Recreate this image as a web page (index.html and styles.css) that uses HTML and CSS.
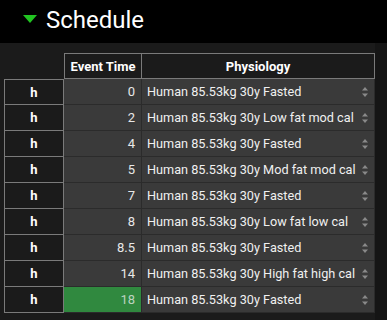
FILE: index.html
```html
<!DOCTYPE html>
<html>
<head>
<meta charset="utf-8">
<link rel="stylesheet" href="styles.css">
</head>
<body>
<div class="titlebar">
  <svg class="tri" width="14" height="8" viewBox="0 0 14 8"><polygon points="0,0 14,0 7,8" fill="#21c421"/></svg>
  <span class="title">Schedule</span>
</div>
<div class="panel">
  <table class="grid">
    <thead>
      <tr>
        <th class="corner"></th>
        <th class="hd et">Event Time</th>
        <th class="hd ph">Physiology</th>
      </tr>
    </thead>
    <tbody id="rows"></tbody>
  </table>
</div>
<script src="app.js"></script>
</body>
</html>
```
FILE: app.js
```js
const data = [
  ["0", "Human 85.53kg 30y Fasted"],
  ["2", "Human 85.53kg 30y Low fat mod cal"],
  ["4", "Human 85.53kg 30y Fasted"],
  ["5", "Human 85.53kg 30y Mod fat mod cal"],
  ["7", "Human 85.53kg 30y Fasted"],
  ["8", "Human 85.53kg 30y Low fat low cal"],
  ["8.5", "Human 85.53kg 30y Fasted"],
  ["14", "Human 85.53kg 30y High fat high cal"],
  ["18", "Human 85.53kg 30y Fasted"]
];
const tb = document.getElementById("rows");
const arrows = '<svg class="arr" width="6" height="10" viewBox="0 0 6 10"><polygon points="3,0 6,3.5 0,3.5" fill="#8a8a8a"/><polygon points="0,6.5 6,6.5 3,10" fill="#8a8a8a"/></svg>';
data.forEach((d, i) => {
  const tr = document.createElement("tr");
  const last = i === data.length - 1;
  tr.innerHTML =
    '<td class="rh' + (i === 0 ? ' first' : '') + '">h</td>' +
    '<td class="num' + (last ? ' sel' : '') + '">' + d[0] + '</td>' +
    '<td class="phy"><div class="selbox"><span>' + d[1] + '</span>' + arrows + '</div></td>';
  tb.appendChild(tr);
});
```
FILE: styles.css
```css
html, body {
  margin: 0;
  padding: 0;
}
body {
  background: #151515;
  font-family: Roboto, "Liberation Sans", sans-serif;
  color: #fff;
  width: 387px;
  height: 320px;
  overflow: hidden;
}
.titlebar {
  background: #000;
  height: 43px;
  display: flex;
  align-items: center;
  padding-left: 23px;
  box-sizing: border-box;
}
.tri {
  display: block;
  margin-right: 9px;
  margin-top: -5px;
}
.title {
  font-size: 24px;
  color: #fff;
  line-height: 1;
  margin-top: -4px;
}
.panel {
  background: #1b1b1b;
  width: 375px;
  height: 277px;
  padding: 10px 0 0 4px;
  box-sizing: border-box;
}
.grid {
  border-collapse: separate;
  border-spacing: 0;
  font-size: 13px;
}
.corner {
  width: 60px;
  padding: 0;
}
.hd {
  height: 24px;
  padding: 0;
  border-top: 1px solid #7a7a7a;
  border-bottom: 1px solid #7a7a7a;
  border-right: 1px solid #7a7a7a;
  font-weight: bold;
  color: #fff;
  background: #1b1b1b;
  text-align: center;
}
.et {
  width: 76px;
  border-left: 1px solid #7a7a7a;
}
.ph {
  width: 232px;
}
td {
  height: 25px;
  padding: 0;
}
.rh {
  width: 58px;
  border-left: 1px solid #7a7a7a;
  border-right: 1px solid #7a7a7a;
  border-bottom: 1px solid #7a7a7a;
  text-align: center;
  font-weight: bold;
  background: #1b1b1b;
  color: #fff;
}
.rh.first {
  border-top: 1px solid #7a7a7a;
  height: 24px;
}
.num {
  background: #3a3a3a;
  border-right: 1px solid #2b2b2b;
  border-bottom: 1px solid #2b2b2b;
  text-align: right;
  padding-right: 6px;
  color: #e8e8e8;
  width: 71px;
}
.num.sel {
  background: #30893f;
  color: #bcd3c0;
}
.phy {
  background: #3a3a3a;
  border-bottom: 1px solid #2b2b2b;
  border-right: 1px solid #2b2b2b;
}
.selbox {
  display: flex;
  align-items: center;
  justify-content: space-between;
  padding: 0 6px 0 5px;
  color: #f0f0f0;
  white-space: nowrap;
  font-size: 12.7px;
}
.arr {
  display: block;
}
```
